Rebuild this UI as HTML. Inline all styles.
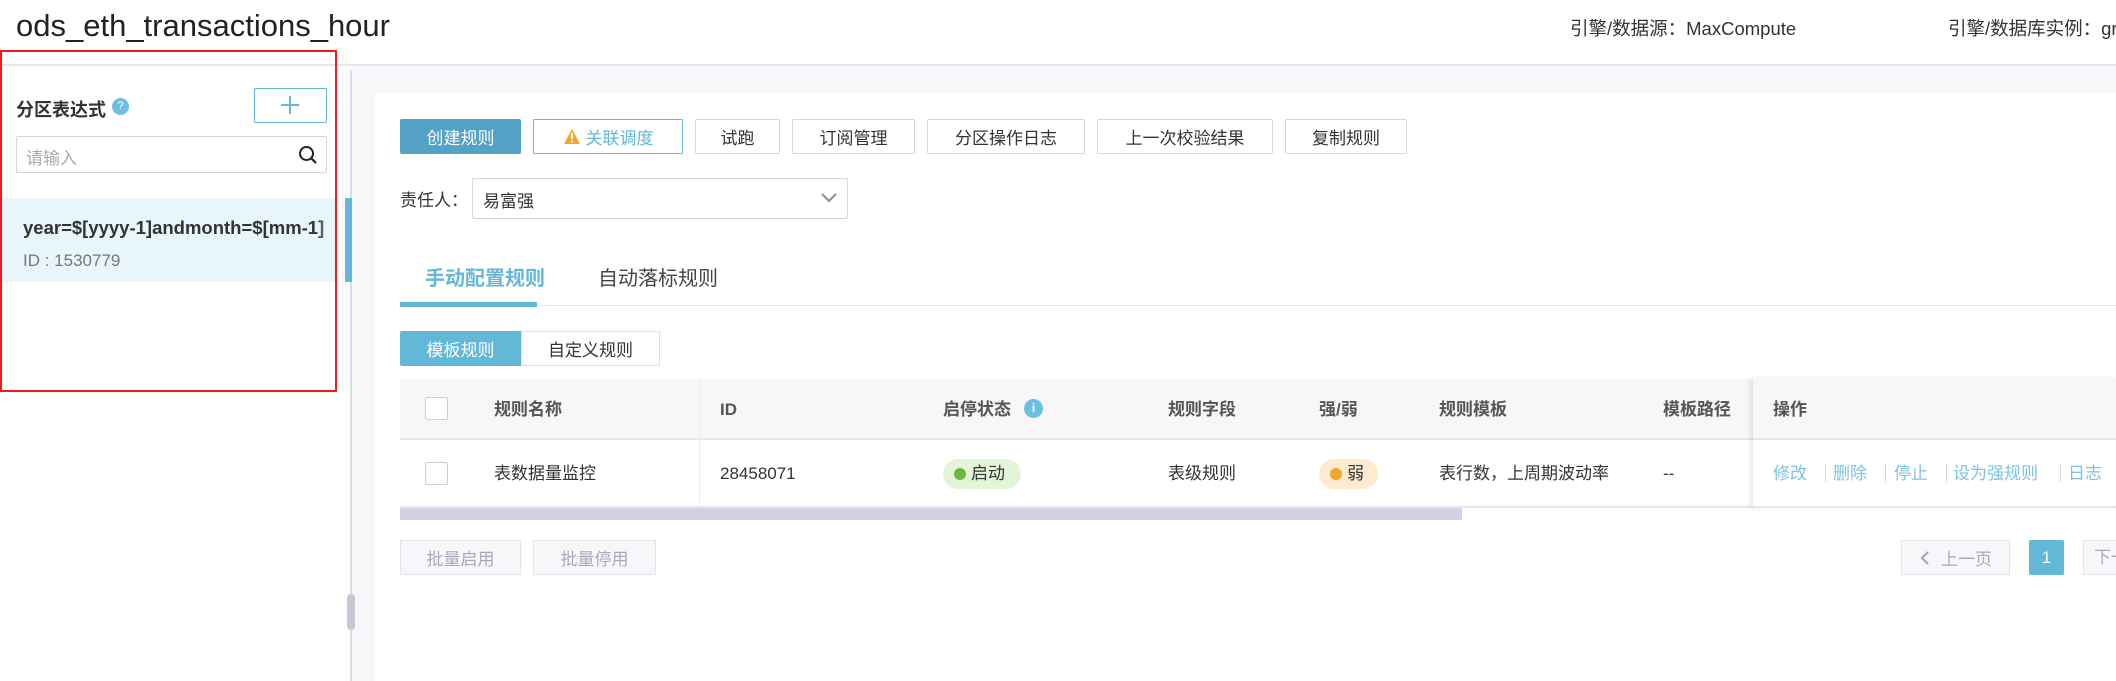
<!DOCTYPE html>
<html><head><meta charset="utf-8"><style>
*{box-sizing:border-box;margin:0;padding:0}
body{width:2116px;height:681px;overflow:hidden;background:#fff;font-family:"Liberation Sans","Noto Sans CJK SC",sans-serif;color:#333;position:relative;font-size:17px}
.a{position:absolute;white-space:nowrap}
.btn{position:absolute;top:119px;height:35px;border:1px solid #d5d5e2;border-radius:2px;background:#fff;display:flex;align-items:center;justify-content:center;font-size:17px;color:#333}
.th{position:absolute;top:398px;line-height:24px;font-weight:bold;color:#555;font-size:17px}
.td{position:absolute;top:462px;line-height:24px;font-size:17px;color:#333}
.op{position:absolute;top:462px;line-height:24px;color:#7cc4e4;font-size:17px}
.sep{position:absolute;top:464px;width:1px;height:18px;background:#d8d8e4}
</style></head><body>
<div class="a" style="left:16px;top:8px;font-size:31px;color:#222">ods_eth_transactions_hour</div>
<div class="a" style="left:1570px;top:15px;font-size:18.5px;color:#333">引擎/数据源：MaxCompute</div>
<div class="a" style="left:1948px;top:15px;font-size:18.5px;color:#333">引擎/数据库实例：gr</div>
<div class="a" style="left:0;top:64px;width:2116px;height:2px;background:#e6e6ee"></div>
<div class="a" style="left:352px;top:66px;width:1764px;height:615px;background:#f7f7f9"></div>
<div class="a" style="left:350px;top:70px;width:2px;height:611px;background:#dcdce6"></div>
<div class="a" style="left:375px;top:93px;width:1741px;height:588px;background:#fff"></div>
<!-- left -->
<div class="a" style="left:16px;top:96px;font-size:18px;font-weight:bold;color:#333">分区表达式</div>
<div class="a" style="left:112px;top:98px;width:17px;height:17px;border-radius:50%;background:#6cbfe0;color:#fff;font-size:11px;text-align:center;line-height:17px">?</div>
<div class="a" style="left:254px;top:88px;width:73px;height:35px;border:1px solid #63b8d8;border-radius:2px"></div>
<div class="a" style="left:281px;top:104px;width:18px;height:2px;background:#63b8d8"></div>
<div class="a" style="left:289px;top:96px;width:2px;height:18px;background:#63b8d8"></div>
<div class="a" style="left:16px;top:136px;width:311px;height:37px;border:1px solid #d5d5e2;border-radius:2px"></div>
<div class="a" style="left:26px;top:144px;color:#aaa;font-size:17px">请输入</div>
<svg class="a" style="left:298px;top:145px" width="20" height="20"><circle cx="8.5" cy="8.5" r="6.5" fill="none" stroke="#222" stroke-width="2"/><path d="M13 13L18 18" stroke="#222" stroke-width="2.2"/></svg>
<div class="a" style="left:0;top:198px;width:336px;height:84px;background:#e8f5fa;overflow:hidden"><div class="a" style="left:23px;top:19px;font-weight:bold;font-size:18.5px;color:#333">year=$[yyyy-1]andmonth=$[mm-1]</div><div class="a" style="left:23px;top:53px;font-size:17px;color:#777">ID : 1530779</div></div>
<div class="a" style="left:318px;top:198px;width:18px;height:84px;background:linear-gradient(90deg,rgba(232,245,250,0),#e8f5fa)"></div>
<div class="a" style="left:345px;top:198px;width:7px;height:84px;background:#63b8d8"></div>
<div class="a" style="left:347px;top:594px;width:8px;height:36px;border-radius:4px;background:#c8c8d4"></div>
<div class="a" style="left:0;top:50px;width:337px;height:342px;border:2px solid #f01c1c"></div>
<!-- buttons -->
<div class="btn" style="left:400px;width:121px;background:#52a2c5;border-color:#52a2c5;color:#fff">创建规则</div>
<div class="btn" style="left:533px;width:150px;border-color:#63b8d8;color:#63b8d8"><svg width="18" height="17" style="margin-right:5px"><path d="M9 1L17 16H1Z" fill="#f0a62e"/><rect x="8" y="5" width="2" height="6" fill="#fff"/><rect x="8" y="12.5" width="2" height="2" fill="#fff"/></svg>关联调度</div>
<div class="btn" style="left:695px;width:85px">试跑</div>
<div class="btn" style="left:792px;width:123px">订阅管理</div>
<div class="btn" style="left:927px;width:158px">分区操作日志</div>
<div class="btn" style="left:1097px;width:176px">上一次校验结果</div>
<div class="btn" style="left:1285px;width:122px">复制规则</div>
<div class="a" style="left:400px;top:186px">责任人：</div>
<div class="a" style="left:472px;top:178px;width:376px;height:41px;border:1px solid #d5d5e2;border-radius:2px"></div>
<div class="a" style="left:483px;top:187px">易富强</div>
<svg class="a" style="left:820px;top:191px" width="18" height="14"><path d="M2 3L9 10L16 3" fill="none" stroke="#8a8aa0" stroke-width="2"/></svg>
<!-- tabs -->
<div class="a" style="left:400px;top:305px;width:1716px;height:1px;background:#e6e6ee"></div>
<div class="a" style="left:425px;top:262px;font-size:20px;font-weight:bold;color:#63b8d8">手动配置规则</div>
<div class="a" style="left:598px;top:262px;font-size:20px;color:#444">自动落标规则</div>
<div class="a" style="left:400px;top:302px;width:137px;height:5px;background:#63b8d8"></div>
<div class="a" style="left:400px;top:331px;width:121px;height:35px;background:#63b8d8;color:#fff;display:flex;align-items:center;justify-content:center;border-radius:2px 0 0 2px">模板规则</div>
<div class="a" style="left:521px;top:331px;width:139px;height:35px;border:1px solid #e0e0ea;display:flex;align-items:center;justify-content:center">自定义规则</div>
<!-- table -->
<div class="a" style="left:400px;top:379px;width:1716px;height:61px;background:#f7f7fa;border-bottom:2px solid #e6e6f0"></div>
<div class="a" style="left:400px;top:506px;width:1353px;height:2px;background:#e6e6f0"></div>
<div class="a" style="left:699px;top:379px;width:1px;height:127px;background:#ececf3"></div>
<div class="a" style="left:400px;top:508px;width:1062px;height:12px;background:#d0d2e4"></div>
<div class="a" style="left:425px;top:397px;width:23px;height:23px;border:1px solid #cfcfdc;border-radius:2px;background:#fff"></div>
<div class="a" style="left:425px;top:462px;width:23px;height:23px;border:1px solid #cfcfdc;border-radius:2px;background:#fff"></div>
<div class="th" style="left:494px">规则名称</div>
<div class="th" style="left:720px">ID</div>
<div class="th" style="left:943px">启停状态</div>
<div class="a" style="left:1024px;top:399px;width:19px;height:19px;border-radius:50%;background:#6cbfe0;color:#fff;font-size:12px;text-align:center;line-height:19px;font-weight:bold">i</div>
<div class="th" style="left:1168px">规则字段</div>
<div class="th" style="left:1319px">强/弱</div>
<div class="th" style="left:1439px">规则模板</div>
<div class="th" style="left:1663px">模板路径</div>
<div class="td" style="left:494px">表数据量监控</div>
<div class="td" style="left:720px">28458071</div>
<div class="a" style="left:943px;top:459px;width:78px;height:30px;border-radius:15px;background:#e3f5d9"></div>
<div class="a" style="left:954px;top:468px;width:12px;height:12px;border-radius:50%;background:#6ab842"></div>
<div class="td" style="left:971px">启动</div>
<div class="td" style="left:1168px">表级规则</div>
<div class="a" style="left:1319px;top:459px;width:59px;height:30px;border-radius:15px;background:#fcebd0"></div>
<div class="a" style="left:1330px;top:468px;width:12px;height:12px;border-radius:50%;background:#f0a830"></div>
<div class="td" style="left:1347px">弱</div>
<div class="td" style="left:1439px">表行数，上周期波动率</div>
<div class="td" style="left:1663px">--</div>
<div class="a" style="left:1753px;top:378px;width:363px;height:130px;background:#fff;box-shadow:-3px 0 5px rgba(0,0,0,.08);border-bottom:2px solid #e6e6f0"></div>
<div class="a" style="left:1753px;top:378px;width:363px;height:62px;background:#f7f7fa;border-bottom:2px solid #e6e6f0"></div>
<div class="th" style="left:1773px">操作</div>
<div class="op" style="left:1773px">修改</div><div class="sep" style="left:1825px"></div>
<div class="op" style="left:1833px">删除</div><div class="sep" style="left:1885px"></div>
<div class="op" style="left:1894px">停止</div><div class="sep" style="left:1946px"></div>
<div class="op" style="left:1953px">设为强规则</div><div class="sep" style="left:2060px"></div>
<div class="op" style="left:2068px">日志</div>
<!-- bottom -->
<div class="a" style="left:400px;top:540px;width:121px;height:35px;background:#f7f7fa;border:1px solid #e3e3ec;color:#a8a8bd;display:flex;align-items:center;justify-content:center">批量启用</div>
<div class="a" style="left:533px;top:540px;width:123px;height:35px;background:#f7f7fa;border:1px solid #e3e3ec;color:#a8a8bd;display:flex;align-items:center;justify-content:center">批量停用</div>
<div class="a" style="left:1901px;top:540px;width:109px;height:35px;background:#f7f7fa;border:1px solid #e3e3ec;color:#a8a8bd;display:flex;align-items:center;justify-content:center"><svg width="12" height="16" style="margin-right:10px"><path d="M9 2L3 8L9 14" fill="none" stroke="#a8a8bd" stroke-width="2.2"/></svg>上一页</div>
<div class="a" style="left:2029px;top:540px;width:35px;height:35px;background:#63b8d8;color:#fff;display:flex;align-items:center;justify-content:center;border-radius:2px">1</div>
<div class="a" style="left:2083px;top:540px;width:80px;height:35px;background:#f7f7fa;border:1px solid #e3e3ec;color:#a8a8bd;padding-left:10px;line-height:33px">下一页</div>
</body></html>
